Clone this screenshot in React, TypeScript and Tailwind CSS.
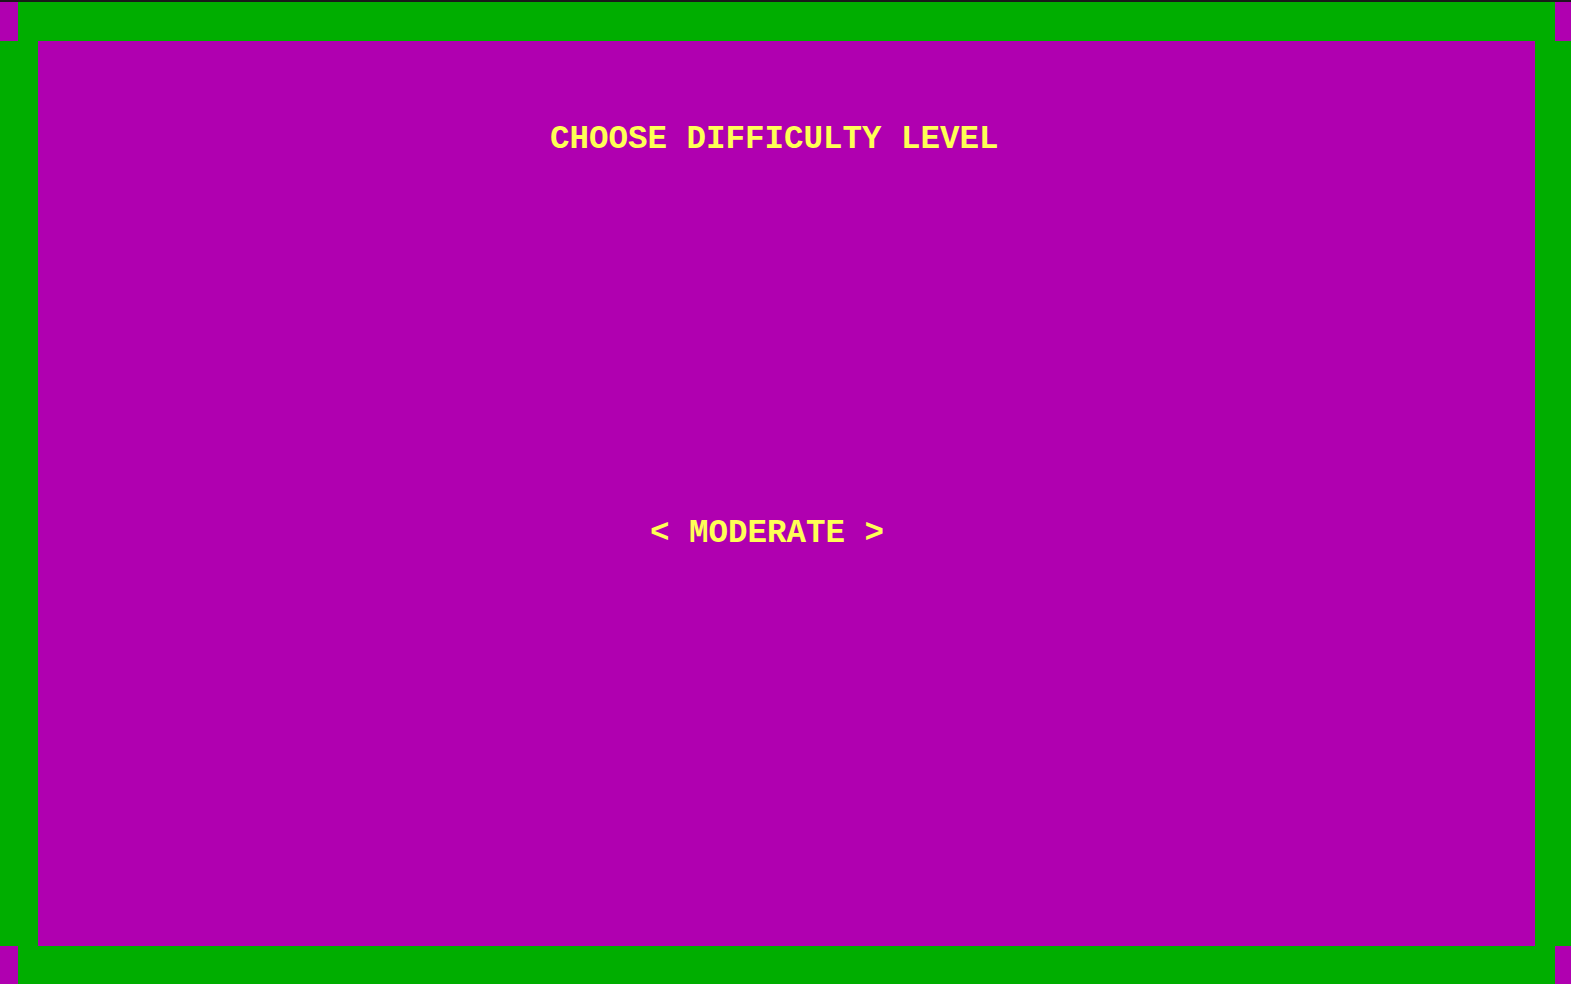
export default function App() {
  return (
    <div className="w-[1571px] h-[984px] bg-[#00ae00] flex flex-col overflow-hidden">
      <div className="h-[2px] bg-[#1a1a1a]" />
      <div className="h-[39px] flex justify-between">
        <div className="w-[18px] bg-[#b000b0]" />
        <div className="w-[16px] bg-[#b000b0]" />
      </div>
      <div className="flex-1 flex pl-[38px] pr-[36px]">
        <div className="flex-1 bg-[#b000b0] flex flex-col text-[#ffff55] font-['Liberation_Mono',monospace] font-bold text-[32.5px] leading-none">
          <div className="mt-[83px] pl-[512px] whitespace-pre">CHOOSE DIFFICULTY LEVEL</div>
          <div className="mt-[361px] pl-[612px] whitespace-pre">{"< MODERATE >"}</div>
        </div>
      </div>
      <div className="h-[38px] flex justify-between">
        <div className="w-[18px] bg-[#b000b0]" />
        <div className="w-[16px] bg-[#b000b0]" />
      </div>
    </div>
  );
}
